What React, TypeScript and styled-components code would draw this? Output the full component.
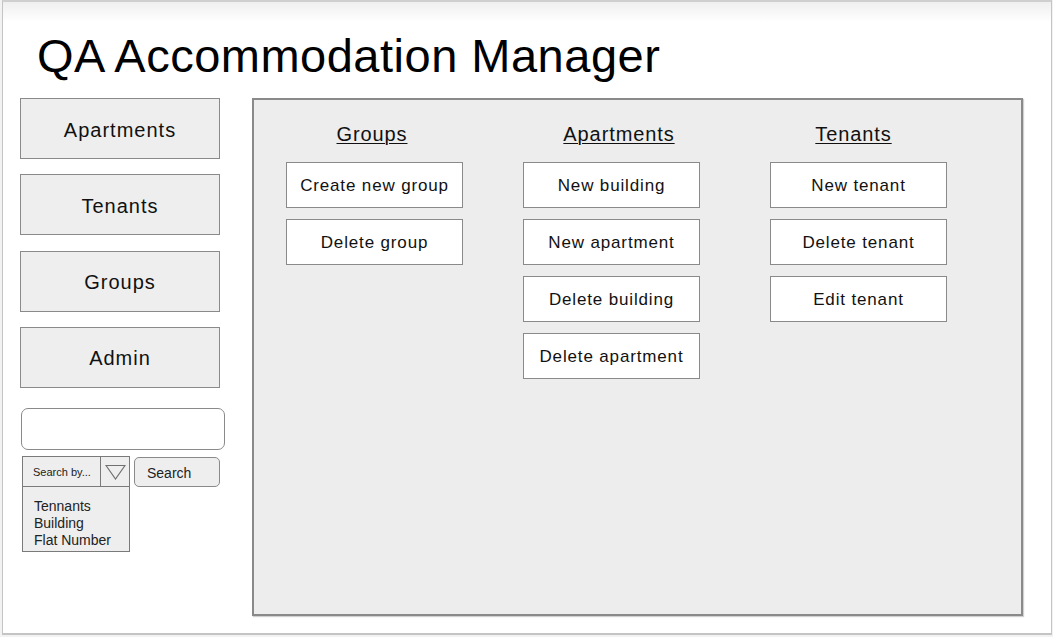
import React from "react";
import styled, { createGlobalStyle } from "styled-components";

const Global = createGlobalStyle`
  html, body { margin: 0; padding: 0; background: #f2f2f2; }
  body { font-family: "Liberation Sans", Arial, sans-serif; color: #111; }
  * { box-sizing: border-box; }
`;

const Frame = styled.div`
  margin-left: 2px;
  width: 1050px;
  height: 635px;
  border-left: 1px solid #c4c4c4;
  border-right: 1px solid #c4c4c4;
  border-bottom: 2px solid #c4c4c4;
  border-top: 2px solid #cfcfcf;
  background: linear-gradient(#efefef 0px, #ffffff 20px);
  display: flex;
  flex-direction: column;
`;

const Header = styled.header`
  height: 96px;
  padding: 30px 0 0 34px;
`;

const Title = styled.h1`
  margin: 0;
  font-size: 47px;
  line-height: 47px;
  font-weight: 400;
  letter-spacing: 0.5px;
  color: #000;
`;

const Body = styled.div`
  display: flex;
  padding-left: 17px;
`;

const Sidebar = styled.aside`
  width: 232px;
  display: flex;
  flex-direction: column;
  gap: 15.3px;
`;

const NavButton = styled.div`
  width: 200px;
  height: 61px;
  border: 1.5px solid #8a8a8a;
  background: #eeeeee;
  display: flex;
  align-items: center;
  justify-content: center;
  padding-top: 3px;
  font-size: 20px;
  letter-spacing: 1px;
  color: #111;
`;

const SearchBox = styled.div`
  margin-top: 5px;
  width: 204px;
  height: 42px;
  margin-left: 1px;
  border: 1.5px solid #8a8a8a;
  border-radius: 7px;
  background: #fff;
`;

const SearchRow = styled.div`
  display: flex;
  gap: 4px;
  margin-top: -9px;
  margin-left: 2px;
  align-items: flex-start;
`;

const Dropdown = styled.div`
  width: 108px;
  border: 1.5px solid #7a7a7a;
  background: #eeeeee;
`;

const DropHead = styled.div`
  display: flex;
  height: 30px;
  border-bottom: 1.5px solid #7a7a7a;
`;

const DropLabel = styled.div`
  flex: 1;
  display: flex;
  align-items: center;
  padding-left: 10px;
  font-size: 11px;
  color: #222;
`;

const DropArrow = styled.div`
  width: 29px;
  border-left: 1.5px solid #7a7a7a;
  display: flex;
  align-items: center;
  justify-content: center;
`;

const DropList = styled.div`
  padding: 11px 0 2px 11px;
  font-size: 14px;
  line-height: 17px;
  color: #222;
`;

const SearchButton = styled.div`
  margin-top: 1px;
  width: 86px;
  height: 30px;
  border: 1.5px solid #8a8a8a;
  border-radius: 5px;
  background: #eeeeee;
  display: flex;
  align-items: center;
  padding-left: 12px;
  padding-top: 1px;
  font-size: 14px;
  color: #222;
`;

const Panel = styled.main`
  width: 771px;
  height: 518px;
  border: 2px solid #8a8a8a;
  box-shadow: 1px 1px 1px rgba(0, 0, 0, 0.18);
  background: #ededed;
  display: flex;
  padding: 22px 0 0 32px;
`;

const Column = styled.section<{ $gap: number }>`
  width: 177px;
  margin-left: ${(p) => p.$gap}px;
  display: flex;
  flex-direction: column;
  align-items: center;
`;

const Heading = styled.h2<{ $shift: number }>`
  margin: 0 0 16px 0;
  margin-left: ${(p) => (p.$shift > 0 ? p.$shift * 2 : 0)}px;
  margin-right: ${(p) => (p.$shift < 0 ? -p.$shift * 2 : 0)}px;
  font-size: 20px;
  line-height: 24px;
  font-weight: 400;
  letter-spacing: 0.9px;
  text-decoration: underline;
  text-decoration-thickness: 1px;
  text-underline-offset: 2px;
  color: #111;
  white-space: nowrap;
`;

const ActionList = styled.div`
  display: flex;
  flex-direction: column;
  gap: 11px;
`;

const Action = styled.div`
  width: 177px;
  height: 46px;
  border: 1.5px solid #8a8a8a;
  background: #ffffff;
  display: flex;
  align-items: center;
  justify-content: center;
  padding-top: 1px;
  font-size: 17px;
  letter-spacing: 0.85px;
  color: #111;
  white-space: nowrap;
`;

const columns = [
  { title: "Groups", gap: 0, shift: -2.5, items: ["Create new group", "Delete group"] },
  {
    title: "Apartments",
    gap: 60,
    shift: 7.5,
    items: ["New building", "New apartment", "Delete building", "Delete apartment"],
  },
  { title: "Tenants", gap: 70, shift: -5, items: ["New tenant", "Delete tenant", "Edit tenant"] },
];

export default function App() {
  return (
    <>
      <Global />
      <Frame>
        <Header>
          <Title>QA Accommodation Manager</Title>
        </Header>
        <Body>
          <Sidebar>
            <NavButton>Apartments</NavButton>
            <NavButton>Tenants</NavButton>
            <NavButton>Groups</NavButton>
            <NavButton>Admin</NavButton>
            <SearchBox />
            <SearchRow>
              <Dropdown>
                <DropHead>
                  <DropLabel>Search by...</DropLabel>
                  <DropArrow>
                    <svg width="21" height="16" viewBox="0 0 21 16">
                      <polygon points="1,1.5 20,1.5 10.5,15" fill="none" stroke="#6f6f6f" strokeWidth="1.2" />
                    </svg>
                  </DropArrow>
                </DropHead>
                <DropList>
                  <div>Tennants</div>
                  <div>Building</div>
                  <div>Flat Number</div>
                </DropList>
              </Dropdown>
              <SearchButton>Search</SearchButton>
            </SearchRow>
          </Sidebar>
          <Panel>
            {columns.map((c) => (
              <Column key={c.title} $gap={c.gap}>
                <Heading $shift={c.shift}>{c.title}</Heading>
                <ActionList>
                  {c.items.map((i) => (
                    <Action key={i}>{i}</Action>
                  ))}
                </ActionList>
              </Column>
            ))}
          </Panel>
        </Body>
      </Frame>
    </>
  );
}
